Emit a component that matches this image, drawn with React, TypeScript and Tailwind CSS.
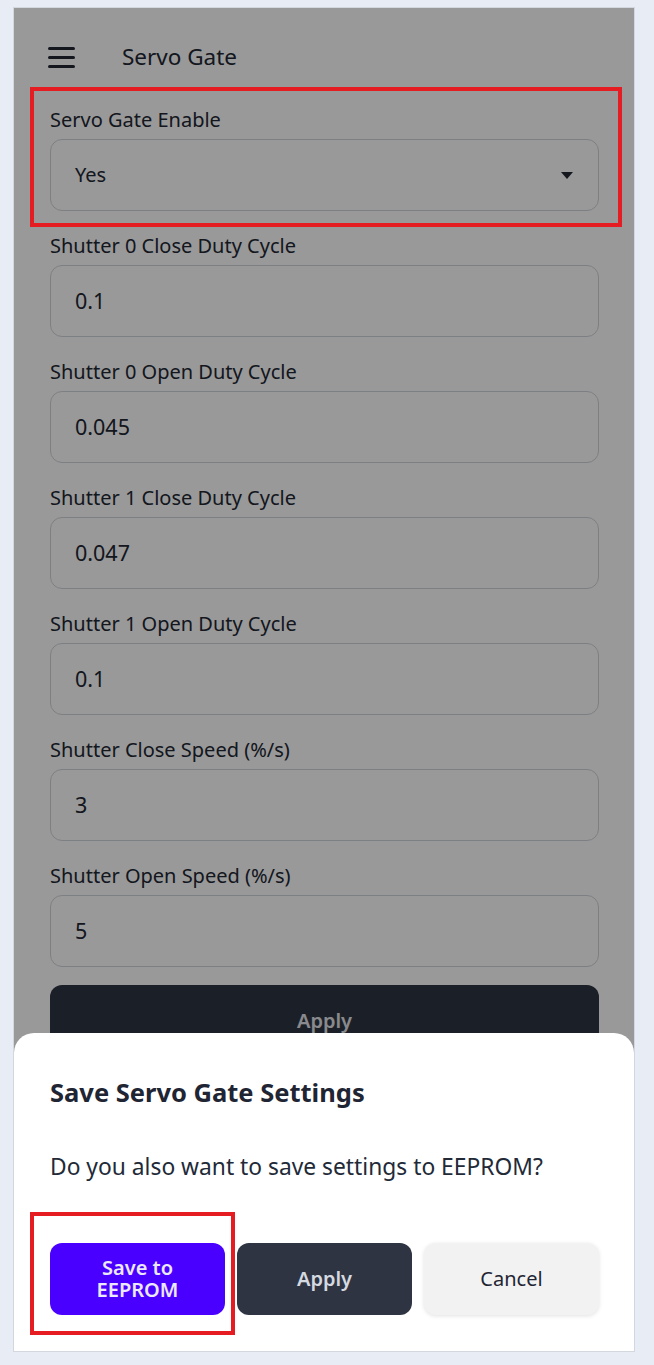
import React from "react";

const fields = [
  { label: "Shutter 0 Close Duty Cycle", value: "0.1" },
  { label: "Shutter 0 Open Duty Cycle", value: "0.045" },
  { label: "Shutter 1 Close Duty Cycle", value: "0.047" },
  { label: "Shutter 1 Open Duty Cycle", value: "0.1" },
  { label: "Shutter Close Speed (%/s)", value: "3" },
  { label: "Shutter Open Speed (%/s)", value: "5" },
];

export default function App() {
  return (
    <div
      className="min-h-[1365px] w-full bg-[#e8edf5] pt-[7px]"
      style={{ fontFamily: '"Noto Sans", "Open Sans", sans-serif' }}
    >
      <div className="relative ml-[13px] h-[1345px] w-[622px] overflow-hidden border border-[#d3d7de] bg-white">
        {/* header */}
        <div className="mt-[21px] flex h-[56px] items-center pl-[34px]">
          <div className="flex w-[27px] flex-col gap-[6px]">
            <span className="block h-[3px] w-[27px] rounded-full bg-[#222733]" />
            <span className="block h-[3px] w-[27px] rounded-full bg-[#222733]" />
            <span className="block h-[3px] w-[27px] rounded-full bg-[#222733]" />
          </div>
          <span className="ml-[47px] text-[22.5px] text-[#222733]">Servo Gate</span>
        </div>

        {/* form */}
        <div className="pl-[36px] pr-[35px] pt-[22px]">
          <div className="flex flex-col gap-[22px]">
            <div className="relative">
              <div className="h-[26px] whitespace-nowrap text-[20px] leading-[26px] text-[#222733]">Servo Gate Enable</div>
              <div className="mt-[6px] flex h-[72px] items-center justify-between rounded-[12px] border border-[#d1d5db] pl-[24px] pr-[25px]">
                <span className="text-[20px] text-[#222733]">Yes</span>
                <svg width="12" height="7" viewBox="0 0 12 7">
                  <path d="M0 0 L12 0 L6 7 Z" fill="#222733" />
                </svg>
              </div>
              <div className="pointer-events-none absolute -top-[20px] -bottom-[16px] -left-[20px] -right-[23px] z-20 border-[4px] border-[#e51d22]" />
            </div>
            {fields.map((f) => (
              <div key={f.label}>
                <div className="h-[26px] whitespace-nowrap text-[20px] leading-[26px] text-[#222733]">{f.label}</div>
                <div className="mt-[6px] flex h-[72px] items-center rounded-[12px] border border-[#d1d5db] pl-[24px]">
                  <span className="text-[21.5px] text-[#222733]">{f.value}</span>
                </div>
              </div>
            ))}
          </div>
          <div className="mt-[18px] flex h-[72px] items-center justify-center rounded-[12px] bg-[#2e3441] text-[20px] font-semibold text-[#e5e7eb]">
            Apply
          </div>
        </div>

        {/* overlay */}
        <div className="absolute inset-0 z-10 bg-black/40" />

        {/* bottom sheet */}
        <div className="absolute bottom-0 left-0 right-0 z-30 h-[318px] rounded-t-[20px] bg-white pl-[36px] pr-[35px] pt-[43px]">
          <div className="h-[32px] whitespace-nowrap text-[25.5px] font-bold leading-[32px] text-[#1f2533]">
            Save Servo Gate Settings
          </div>
          <div className="mt-[44px] h-[30px] whitespace-nowrap text-[22.8px] leading-[30px] text-[#222a38]">
            Do you also want to save settings to EEPROM?
          </div>
          <div className="mt-[61px] grid grid-cols-3 gap-[12px]">
            <div className="relative">
              <div className="flex h-[72px] flex-col items-center justify-center rounded-[12px] bg-[#4a00ff] px-2 text-center text-[20px] font-semibold leading-[22px] text-[#ece8ff]">
                <span>Save to</span>
                <span>EEPROM</span>
              </div>
              <div className="pointer-events-none absolute -top-[31px] -bottom-[20px] -left-[20px] -right-[10px] border-[4px] border-[#e51d22]" />
            </div>
            <div className="flex h-[72px] items-center justify-center rounded-[12px] bg-[#2e3441] text-[20px] font-semibold text-[#d5d9e0]">
              Apply
            </div>
            <div className="flex h-[72px] items-center justify-center rounded-[12px] bg-[#f2f2f2] text-[20px] text-[#1f2533] shadow-[0_1px_4px_rgba(0,0,0,0.12)]">
              Cancel
            </div>
          </div>
        </div>
      </div>
    </div>
  );
}
